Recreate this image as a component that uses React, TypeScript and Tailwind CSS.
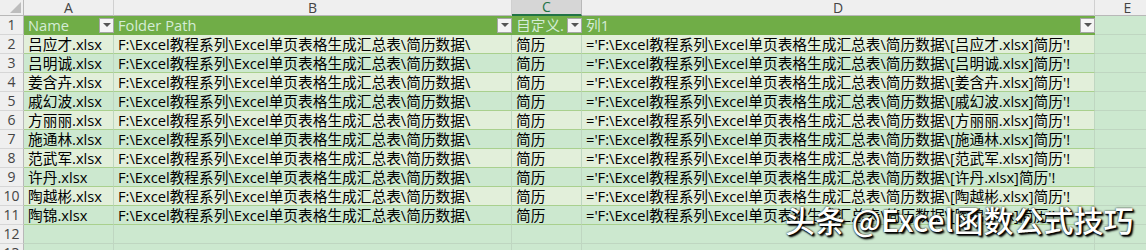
import React from "react";

const names = ["吕应才", "吕明诚", "姜含卉", "戚幻波", "方丽丽", "施通林", "范武军", "许丹", "陶越彬", "陶锦"];
const folder = "F:\\Excel教程系列\\Excel单页表格生成汇总表\\简历数据\\";

const font = "font-['Open_Sans','Noto_Sans_CJK_SC',sans-serif]";

function FilterButton() {
  return (
    <div className="flex h-[15px] w-[15px] shrink-0 items-center justify-center border border-[#a6a6a6] bg-[#f4f4f4]">
      <div className="h-0 w-0 border-x-[4px] border-t-[4px] border-x-transparent border-t-[#555]" />
    </div>
  );
}

function ColHead({ label, active }: { label: string; active?: boolean }) {
  return (
    <div
      className={
        active
          ? "flex items-center justify-center border-r border-b-2 border-r-[#b8b8b8] border-b-[#217346] bg-[#d6d6d6] text-[14px] leading-none text-[#217346]"
          : "flex items-center justify-center border-r border-b border-r-[#d0d0d0] border-b-[#b8b8b8] bg-[#efefef] text-[14px] leading-none text-[#444]"
      }
    >
      {label}
    </div>
  );
}

function RowHead({ n }: { n: number }) {
  return (
    <div className="flex items-center justify-center border-r border-b border-r-[#b8b8b8] border-b-[#d6d6d6] bg-[#efefef] text-[14px] leading-none text-[#444]">
      {n}
    </div>
  );
}

function HeadCell({ label }: { label: string }) {
  return (
    <div className="flex items-center overflow-hidden border-b border-b-[#70ad47] bg-[#70ad47] pl-1">
      <span className="flex-1 overflow-hidden whitespace-nowrap text-[14.7px] leading-none text-[#d4ecd6]">{label}</span>
      <FilterButton />
    </div>
  );
}

function Cell({ text, light }: { text?: string; light?: boolean }) {
  return (
    <div
      className={`flex items-center overflow-hidden whitespace-nowrap border-r border-b border-r-[#bfd6c1] border-b-[#a9d08e] pl-1 text-[14.7px] leading-none text-black ${
        light ? "bg-[#e2efda]" : "bg-[#cce8cf]"
      }`}
    >
      {text}
    </div>
  );
}

function Empty() {
  return <div className="border-r border-b border-r-[#bfd6c1] border-b-[#bfd6c1] bg-[#cce8cf]" />;
}

export default function App() {
  return (
    <div className={`relative h-[250px] w-[1146px] overflow-hidden bg-[#cce8cf] ${font}`}>
      <div className="grid grid-cols-[24px_90px_398px_70px_513px_66px] grid-rows-[16px_repeat(13,19px)]">
        {/* corner */}
        <div className="relative border-r border-b border-r-[#b8b8b8] border-b-[#b8b8b8] bg-[#efefef]">
          <div className="absolute right-[2px] bottom-[2px] h-0 w-0 border-t-[11px] border-r-[11px] border-t-transparent border-r-[#bdbdbd]" />
        </div>
        <ColHead label="A" />
        <ColHead label="B" />
        <ColHead label="C" active />
        <ColHead label="D" />
        <ColHead label="E" />

        <RowHead n={1} />
        <HeadCell label="Name" />
        <HeadCell label="Folder Path" />
        <HeadCell label="自定义." />
        <HeadCell label="列1" />
        <Empty />

        {names.map((n, i) => {
          const light = i % 2 === 0;
          return (
            <React.Fragment key={n}>
              <RowHead n={i + 2} />
              <Cell text={`${n}.xlsx`} light={light} />
              <Cell text={folder} light={light} />
              <Cell text="简历" light={light} />
              <Cell text={`='${folder}[${n}.xlsx]简历'!`} light={light} />
              <Empty />
            </React.Fragment>
          );
        })}

        {[12, 13].map((r) => (
          <React.Fragment key={r}>
            <RowHead n={r} />
            <Empty />
            <Empty />
            <Empty />
            <Empty />
            <Empty />
          </React.Fragment>
        ))}
      </div>

      {/* watermark overlay */}
      <div className="absolute left-[785px] top-[204px] whitespace-nowrap font-['Noto_Sans_CJK_SC',sans-serif] text-[30px] font-medium leading-none text-white [text-shadow:0_0_2px_#000,1px_1px_1px_#000,2px_2px_2px_#000]">
        头条 @Excel函数公式技巧
      </div>
    </div>
  );
}
